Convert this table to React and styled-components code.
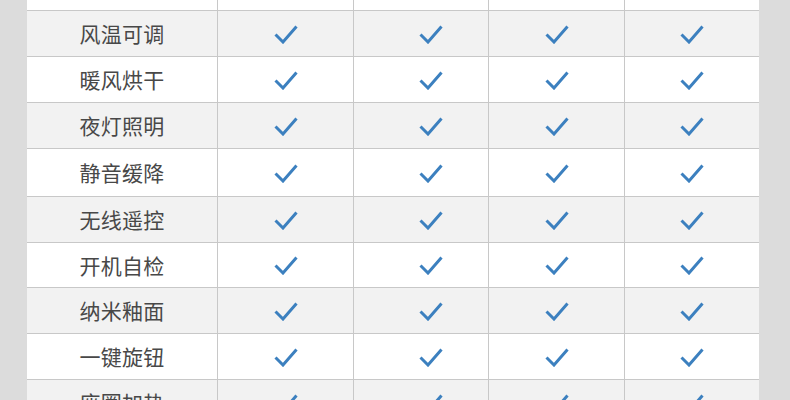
import React from "react";
import styled, { createGlobalStyle } from "styled-components";

const Global = createGlobalStyle`
  html, body { margin: 0; padding: 0; background: #dcdcdc; }
  body { font-family: "Noto Sans CJK SC", "Noto Sans", sans-serif; overflow: hidden; }
`;

const Page = styled.div`
  width: 790px;
  height: 400px;
  overflow: hidden;
  background: #dcdcdc;
  padding: 0 31px 0 27px;
  box-sizing: border-box;
`;

const Table = styled.div`
  display: flex;
  flex-direction: column;
  width: 732px;
`;

const Row = styled.div`
  display: grid;
  grid-template-columns: 190px 136px 135px 136px 135px;
  height: ${(p) => p.$h}px;
  flex: 0 0 auto;
  box-sizing: border-box;
  border-top: ${(p) => (p.$first ? "none" : "1px solid #c8c8c8")};
  background: ${(p) => (p.$shade ? "#f2f2f2" : "#ffffff")};
`;

const Label = styled.div`
  display: flex;
  align-items: center;
  justify-content: center;
  font-size: 21px;
  color: #484848;
  letter-spacing: 0.3px;
  padding-bottom: 1px;
`;

const Cell = styled.div`
  display: flex;
  align-items: center;
  justify-content: center;
  border-left: 1px solid #c8c8c8;
  box-sizing: border-box;
  padding-left: ${(p) => p.$shift || 0}px;
`;

const Check = () => (
  <svg width="24" height="20" viewBox="0 0 24 20">
    <path
      d="M1.5 10.5 L9 18 L22.5 2.5"
      fill="none"
      stroke="#3c80bf"
      strokeWidth="3"
    />
  </svg>
);

const rows = [
  { name: "风温可调", h: 46 },
  { name: "暖风烘干", h: 46 },
  { name: "夜灯照明", h: 46 },
  { name: "静音缓降", h: 48 },
  { name: "无线遥控", h: 46 },
  { name: "开机自检", h: 45 },
  { name: "纳米釉面", h: 46 },
  { name: "一键旋钮", h: 46 },
  { name: "座圈加热", h: 46 },
];

const shifts = [0, 20, 0, 0];

export default function App() {
  return (
    <Page>
      <Global />
      <Table>
        <Row $h={10} $first>
          <Label />
          <Cell />
          <Cell />
          <Cell />
          <Cell />
        </Row>
        {rows.map((r, i) => (
          <Row key={r.name} $h={r.h} $shade={i % 2 === 0}>
            <Label>{r.name}</Label>
            {shifts.map((s, c) => (
              <Cell key={c} $shift={s}>
                <Check />
              </Cell>
            ))}
          </Row>
        ))}
      </Table>
    </Page>
  );
}
